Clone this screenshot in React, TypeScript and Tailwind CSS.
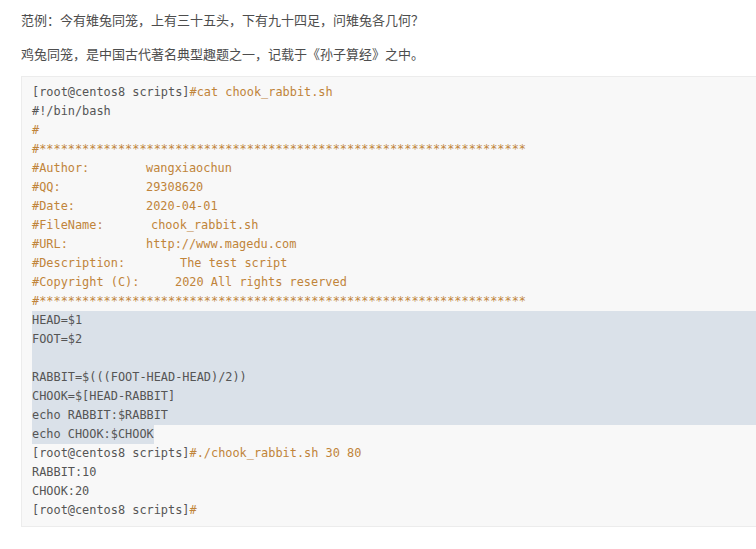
const mono = "font-['DejaVu_Sans_Mono',monospace] text-[11.9px] leading-[19px]";

const gray = "text-[#555]";
const orange = "text-[#c0843a]";

const meta: [string, string, string][] = [
  ["#Author:", "wangxiaochun", "w-[114px]"],
  ["#QQ:", "29308620", "w-[114px]"],
  ["#Date:", "2020-04-01", "w-[114px]"],
  ["#FileName:", "chook_rabbit.sh", "w-[119px]"],
  ["#URL:", "http://www.magedu.com", "w-[114px]"],
  ["#Description:", "The test script", "w-[148px]"],
  ["#Copyright (C):", "2020 All rights reserved", "w-[143px]"],
];

const stars = "#" + "*".repeat(68);

function Line({ children }: { children?: React.ReactNode }) {
  return <div className="h-[19px] whitespace-pre">{children}</div>;
}

export default function App() {
  return (
    <div className="w-[756px] h-[549px] overflow-hidden bg-white">
      <div className="pl-[21px] pt-[10px] font-['Noto_Sans_CJK_SC',sans-serif] text-[13px] text-[#4d4d4d]">
        <p className="leading-[20px]">范例：今有雉兔同笼，上有三十五头，下有九十四足，问雉兔各几何？</p>
        <p className="mt-[14px] leading-[20px]">鸡兔同笼，是中国古代著名典型趣题之一，记载于《孙子算经》之中。</p>

        <div className={`mt-[12px] w-[800px] border border-[#ececec] bg-[#f8f8f8] pl-[10px] py-[6px] ${mono} ${gray}`}>
          <Line>
            [root@centos8 scripts]<span className={orange}>#cat chook_rabbit.sh</span>
          </Line>
          <Line>#!/bin/bash</Line>
          <Line><span className={orange}>#</span></Line>
          <Line><span className={orange}>{stars}</span></Line>
          {meta.map(([k, v, w]) => (
            <Line key={k}>
              <span className={`${orange} inline-block ${w}`}>{k}</span>
              <span className={orange}>{v}</span>
            </Line>
          ))}
          <Line><span className={orange}>{stars}</span></Line>

          <div className="bg-[#dae1e9]">
            <Line>HEAD=$1</Line>
            <Line>FOOT=$2</Line>
            <Line />
            <Line>RABBIT=$(((FOOT-HEAD-HEAD)/2))</Line>
            <Line>CHOOK=$[HEAD-RABBIT]</Line>
            <Line>echo RABBIT:$RABBIT</Line>
          </div>
          <Line>
            <span className="bg-[#dae1e9] inline-block h-[19px]">echo CHOOK:$CHOOK</span>
          </Line>
          <Line>
            [root@centos8 scripts]<span className={orange}>#./chook_rabbit.sh 30 80</span>
          </Line>
          <Line>RABBIT:10</Line>
          <Line>CHOOK:20</Line>
          <Line>
            [root@centos8 scripts]<span className={orange}>#</span>
          </Line>
        </div>
      </div>
    </div>
  );
}
